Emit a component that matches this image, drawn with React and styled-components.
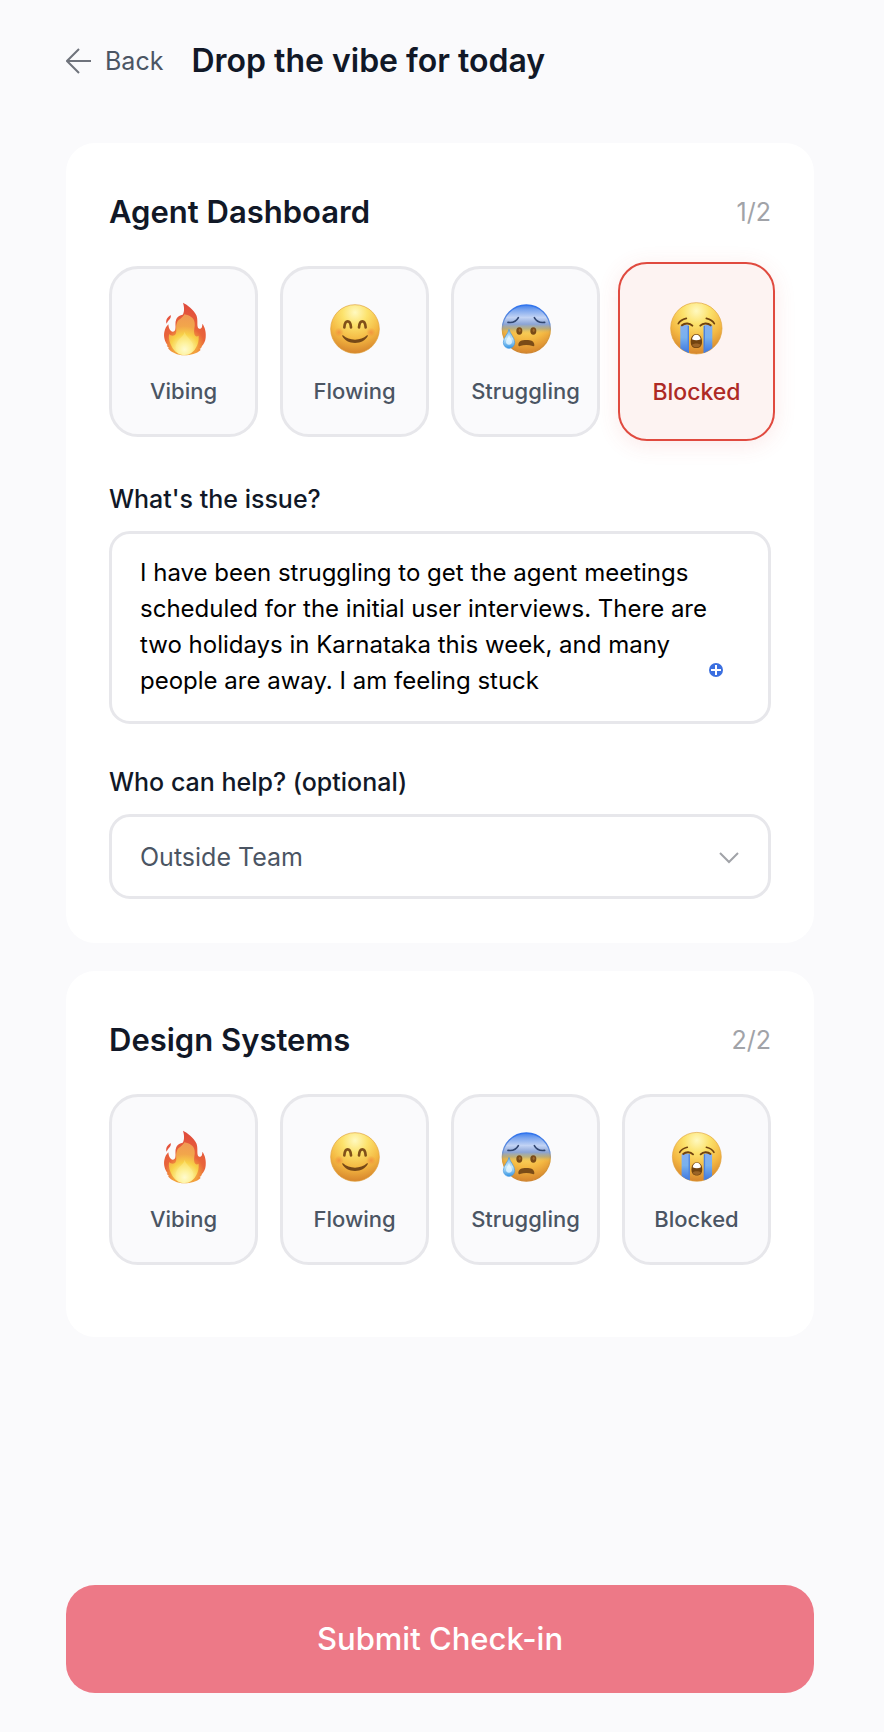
import { useId, useState } from "react";
import styled, { createGlobalStyle, css } from "styled-components";

const colors = {
  page: "#fafafc",
  card: "#ffffff",
  ink: "#111827",
  body: "#4b5563",
  muted: "#a1a3a8",
  line: "#e7e7eb",
  danger: "#e04a3f",
  dangerText: "#ae2a25",
  dangerBg: "#fdf3f2",
  submit: "#ed7987",
};

const GlobalStyle = createGlobalStyle`
  *, *::before, *::after {
    box-sizing: border-box;
  }

  body {
    margin: 0;
    background: ${colors.page};
    color: ${colors.ink};
    font-family: Inter, "Liberation Sans", sans-serif;
  }

  button, select, textarea {
    font-family: inherit;
    margin: 0;
  }
`;

const Page = styled.form`
  display: flex;
  flex-direction: column;
  min-height: 100vh;
  padding: 39px 70px 39px 66px;
`;

const Header = styled.header`
  display: flex;
  align-items: center;
  gap: 28px;
  margin-bottom: 60px;
`;

const BackLink = styled.a`
  display: flex;
  align-items: center;
  gap: 13px;
  color: ${colors.body};
  font-size: 25px;
  line-height: 34px;
  text-decoration: none;
`;

const Title = styled.h1`
  margin: 0;
  font-size: 32px;
  font-weight: 600;
  line-height: 44px;
`;

const Projects = styled.main`
  display: flex;
  flex-direction: column;
  gap: 28px;
`;

const Card = styled.section`
  padding: 49px 43px 44px;
  border-radius: 29px;
  background: ${colors.card};
`;

const CardHeader = styled.div`
  display: flex;
  align-items: center;
  justify-content: space-between;
  margin-bottom: 34px;
`;

const ProjectName = styled.h2`
  margin: 0;
  font-size: 31px;
  font-weight: 600;
  line-height: 40px;
`;

const Counter = styled.span`
  color: ${colors.muted};
  font-size: 25px;
  line-height: 34px;
`;

const Moods = styled.div`
  display: grid;
  grid-template-columns: repeat(4, 1fr);
  gap: 22px;
  margin-bottom: 28px;
`;

const MoodButton = styled.button`
  display: flex;
  flex-direction: column;
  align-items: center;
  gap: 17px;
  min-width: 0;
  padding: 30px 0 28px;
  border: 3px solid ${colors.line};
  border-radius: 29px;
  background: ${colors.page};
  color: ${colors.body};
  font-size: 22px;
  font-weight: 500;
  line-height: 30px;
  cursor: pointer;

  svg {
    width: 60px;
    height: 60px;
  }

  ${(props) =>
    props.$selected &&
    css`
      margin: -4px;
      padding: 33px 0 30px;
      border: 2px solid ${colors.danger};
      background: ${colors.dangerBg};
      box-shadow: 0 4px 22px rgba(224, 74, 63, 0.12);
      color: ${colors.dangerText};
      font-size: 23px;

      svg {
        width: 63px;
        height: 63px;
      }
    `}
`;

const Fields = styled.div`
  display: flex;
  flex-direction: column;
  gap: 41px;
  margin-top: 45px;
`;

const Field = styled.div`
  display: flex;
  flex-direction: column;
  gap: 15px;
`;

const Label = styled.label`
  font-size: 25px;
  font-weight: 500;
  line-height: 34px;
`;

const Control = styled.div`
  position: relative;
  display: flex;
`;

const controlBox = css`
  width: 100%;
  border: 3px solid ${colors.line};
  border-radius: 21px;
  background: ${colors.card};
  line-height: 36px;
  outline: none;
`;

const TextArea = styled.textarea`
  ${controlBox}
  padding: 21px 28px 22px;
  color: #000000;
  font-size: 24px;
  overflow: hidden;
  resize: none;
`;

const Select = styled.select`
  ${controlBox}
  padding: 22px 64px 21px 28px;
  color: ${colors.body};
  font-size: 25px;
  appearance: none;
`;

const AssistButton = styled.button`
  position: absolute;
  right: 48px;
  bottom: 47px;
  display: flex;
  padding: 0;
  border: 0;
  background: none;
`;

const SelectArrow = styled.svg`
  position: absolute;
  top: 38px;
  right: 32px;
  pointer-events: none;
`;

const SubmitButton = styled.button`
  margin-top: auto;
  padding: 34px;
  border: 0;
  border-radius: 29px;
  background: ${colors.submit};
  color: #ffffff;
  font-size: 31px;
  font-weight: 500;
  line-height: 40px;
  cursor: pointer;
`;

function FaceGradient({ id }) {
  return (
    <radialGradient id={id} cx="0.5" cy="0.16" r="0.86">
      <stop offset="0" stopColor="#fff9c0" />
      <stop offset="0.3" stopColor="#fce26c" />
      <stop offset="0.65" stopColor="#f4b842" />
      <stop offset="1" stopColor="#d4812b" />
    </radialGradient>
  );
}

function FireIcon() {
  const id = useId();
  return (
    <svg viewBox="11 27 180 180" aria-hidden="true">
      <defs>
        <radialGradient id={`${id}o`} gradientUnits="userSpaceOnUse" cx="103" cy="170" r="122">
          <stop offset="0.3" stopColor="#f2a03c" />
          <stop offset="0.5" stopColor="#e9643a" />
          <stop offset="1" stopColor="#e04c3c" />
        </radialGradient>
        <radialGradient id={`${id}i`} gradientUnits="userSpaceOnUse" cx="103" cy="178" r="112">
          <stop offset="0" stopColor="#fffde8" />
          <stop offset="0.18" stopColor="#fdf09a" />
          <stop offset="0.4" stopColor="#f8d148" />
          <stop offset="0.62" stopColor="#f2a64b" />
          <stop offset="1" stopColor="#ef9655" />
        </radialGradient>
      </defs>
      <path d="M61 75c2 7-2 12-6 16-3 3-5 7-6 10-4-9 1-19 12-26z" fill="#e5533d" />
      <path
        d="M98 38c13 7 32 20 40 38 5 12 2 26 4 34 2 9 11 8 13 0 1-3 1-6 1-9 8 10 12 27 10 42-1 10-5 18-11 25l-3 7-4 1 3 4c-12 11-30 16-49 16-21 0-39-8-49-21l3-1-7-7 3-1c-8-10-13-25-10-40 2-11 7-18 12-23 1 9 2 15 8 20 5 4 12 2 13-5 2-9-2-20 3-31 4-9 12-11 19-13 6-8 5-23 1-36z"
        fill={`url(#${id}o)`}
      />
      <path
        d="M102 73c16 3 29 10 31 25 2 11-4 23-1 34 2 8 8 9 13 5 1 15-2 27-9 38-7 12-18 20-33 20-17 0-29-9-37-22-8-13-12-27-10-41 6 6 16 7 20 0 5-10-2-20 4-34 4-11 16-12 22-25z"
        fill={`url(#${id}i)`}
      />
      <path
        d="M103 126c4 13 15 19 22 31 9 15 3 32-10 37-8 3-17 3-24 0-15-6-19-22-11-37 6-12 19-17 23-31z"
        fill="#fff7a0"
        opacity="0.35"
      />
    </svg>
  );
}

function SmileIcon() {
  const id = useId();
  return (
    <svg viewBox="30 27 180 180" aria-hidden="true">
      <defs>
        <FaceGradient id={`${id}f`} />
        <radialGradient id={`${id}b`}>
          <stop offset="0" stopColor="#ef7438" stopOpacity="0.55" />
          <stop offset="1" stopColor="#ef7438" stopOpacity="0" />
        </radialGradient>
      </defs>
      <circle cx="120" cy="117" r="73" fill={`url(#${id}f)`} stroke="#dfa03a" strokeWidth="2" />
      <circle cx="72" cy="127" r="14" fill={`url(#${id}b)`} />
      <circle cx="168" cy="127" r="14" fill={`url(#${id}b)`} />
      <g fill="none" stroke="#80501a" strokeLinecap="round">
        <path d="M88 112c1-13 5-18 10-18s9 5 10 18" strokeWidth="8" />
        <path d="M132 112c1-13 5-18 10-18s9 5 10 18" strokeWidth="8" />
      </g>
      <path
        d="M84 136c10 9 22 13 36 13s26-4 36-13c2-1 4 1 2 3-7 13-21 20-38 20s-31-7-38-20c-1-2 0-4 2-3z"
        fill="#764817"
      />
    </svg>
  );
}

function SweatIcon() {
  const id = useId();
  return (
    <svg viewBox="32 27 180 180" aria-hidden="true">
      <defs>
        <FaceGradient id={`${id}f`} />
        <linearGradient id={`${id}c`} x1="0" y1="0" x2="0" y2="1">
          <stop offset="0" stopColor="#3f7fee" />
          <stop offset="0.1" stopColor="#7ba5ee" />
          <stop offset="0.26" stopColor="#c2d3f4" />
          <stop offset="0.4" stopColor="#8ba4d6" />
          <stop offset="0.5" stopColor="#a9a584" stopOpacity="0.75" />
          <stop offset="0.6" stopColor="#f0bd4a" stopOpacity="0" />
        </linearGradient>
        <linearGradient id={`${id}r`} x1="0" y1="0" x2="0" y2="1">
          <stop offset="0" stopColor="#2f73ee" />
          <stop offset="0.4" stopColor="#6d94d8" />
          <stop offset="0.55" stopColor="#dba440" />
          <stop offset="1" stopColor="#cf8530" />
        </linearGradient>
        <linearGradient id={`${id}d`} x1="0" y1="0" x2="0" y2="1">
          <stop offset="0" stopColor="#74b6ed" />
          <stop offset="0.5" stopColor="#c3e7fc" />
          <stop offset="1" stopColor="#3494e3" />
        </linearGradient>
      </defs>
      <circle cx="123" cy="117" r="72" fill={`url(#${id}f)`} />
      <circle
        cx="123"
        cy="117"
        r="72"
        fill={`url(#${id}c)`}
        stroke={`url(#${id}r)`}
        strokeWidth="4"
      />
      <g fill="none" stroke="#30456f" strokeLinecap="round" strokeWidth="5">
        <path d="M68 97c13 2 25-3 31-14" />
        <path d="M178 97c-13 2-25-3-31-14" />
      </g>
      <ellipse cx="102" cy="123" rx="9" ry="11" fill="#7a4b17" />
      <ellipse cx="144" cy="123" rx="9" ry="11" fill="#7a4b17" />
      <ellipse cx="103" cy="121" rx="3" ry="5" fill="#a26c2a" />
      <ellipse cx="145" cy="121" rx="3" ry="5" fill="#a26c2a" />
      <path
        d="M99 165c0-11 10-15 24-15s24 4 24 15c0 4-2 4-5 3-12-4-26-4-38 0-3 1-5 1-5-3z"
        fill="#7a4b17"
      />
      <path
        d="M71 118c2 12 17 25 17 39 0 11-8 18-17 18s-17-7-17-18c0-14 15-27 17-39z"
        fill={`url(#${id}d)`}
        stroke="#4497df"
        strokeWidth="2"
      />
      <path d="M71 134c3 10 9 14 9 22 0 5-4 8-9 8s-9-3-9-8c0-8 6-12 9-22z" fill="#e8f8ff" opacity="0.8" />
    </svg>
  );
}

function CryIcon() {
  const id = useId();
  return (
    <svg viewBox="30 21 189 189" aria-hidden="true">
      <defs>
        <FaceGradient id={`${id}f`} />
        <linearGradient id={`${id}t`} x1="0" y1="0" x2="0" y2="1">
          <stop offset="0" stopColor="#86aef0" />
          <stop offset="0.45" stopColor="#78b1ee" />
          <stop offset="1" stopColor="#3d76df" />
        </linearGradient>
      </defs>
      <circle cx="124" cy="115" r="77" fill={`url(#${id}f)`} stroke="#dfa03a" strokeWidth="2" />
      <path d="M76 107q12-7 26 0v82q-14-4-26-14z" fill={`url(#${id}t)`} />
      <path d="M172 107q-12-7-26 0v82q14-4 26-14z" fill={`url(#${id}t)`} />
      <path d="M98 107h4v82l-4-1zM150 107h-4v82l4-1z" fill="#4c82dc" />
      <g fill="none" stroke="#70420f" strokeLinecap="round">
        <path d="M70 101c4-8 12-13 24-16" strokeWidth="5" />
        <path d="M178 101c-4-8-12-13-24-16" strokeWidth="5" />
        <path d="M81 106c9-8 23-7 31 1" strokeWidth="6" />
        <path d="M167 106c-9-8-23-7-31 1" strokeWidth="6" />
      </g>
      <path
        d="M124 132c10 0 17 9 17 23 0 12-6 19-17 19s-17-7-17-19c0-14 7-23 17-23z"
        fill="#71430f"
      />
      <path d="M111 148c1-9 6-14 13-14s12 5 13 14c-7 4-19 4-26 0z" fill="#ffffff" />
      <path d="M111 165c5-6 21-6 26 0-3 5-7 7-13 7s-10-2-13-7z" fill="#9b6427" />
    </svg>
  );
}

const moods = [
  { name: "Vibing", Icon: FireIcon },
  { name: "Flowing", Icon: SmileIcon },
  { name: "Struggling", Icon: SweatIcon },
  { name: "Blocked", Icon: CryIcon },
];

function ProjectCard(props) {
  const { name, position, initialMood, children } = props;
  const [mood, setMood] = useState(initialMood);

  return (
    <Card>
      <CardHeader>
        <ProjectName>{name}</ProjectName>
        <Counter>{position}</Counter>
      </CardHeader>
      <Moods>
        {moods.map(({ name: label, Icon }) => (
          <MoodButton
            key={label}
            type="button"
            $selected={mood === label}
            aria-pressed={mood === label}
            onClick={() => setMood(label)}
          >
            <Icon />
            {label}
          </MoodButton>
        ))}
      </Moods>
      {children}
    </Card>
  );
}

function BlockerFields() {
  return (
    <Fields>
      <Field>
        <Label htmlFor="issue">What's the issue?</Label>
        <Control>
          <TextArea
            id="issue"
            rows={4}
            spellCheck={false}
            defaultValue="I have been struggling to get the agent meetings scheduled for the initial user interviews. There are two holidays in Karnataka this week, and many people are away. I am feeling stuck"
          />
          <AssistButton type="button" aria-label="Writing suggestions">
            <svg width="14" height="14" viewBox="0 0 14 14">
              <circle cx="7" cy="7" r="7" fill="#3b6fe0" />
              <path d="M7 2v10M2 7h10" stroke="#ffffff" strokeWidth="2" />
            </svg>
          </AssistButton>
        </Control>
      </Field>
      <Field>
        <Label htmlFor="helper">Who can help? (optional)</Label>
        <Control>
          <Select id="helper" defaultValue="outside">
            <option value="outside">Outside Team</option>
          </Select>
          <SelectArrow width="20" height="12" viewBox="0 0 20 12" fill="none" aria-hidden="true">
            <path d="M1 1l9 9 9-9" stroke={colors.muted} strokeWidth="2" />
          </SelectArrow>
        </Control>
      </Field>
    </Fields>
  );
}

function App() {
  return (
    <>
      <GlobalStyle />
      <Page onSubmit={(event) => event.preventDefault()}>
        <Header>
          <BackLink href="#">
            <svg width="26" height="26" viewBox="0 0 26 26" fill="none" aria-hidden="true">
              <path d="M25 13H1M13 1L1 13l12 12" stroke="#6f737c" strokeWidth="2" />
            </svg>
            Back
          </BackLink>
          <Title>Drop the vibe for today</Title>
        </Header>
        <Projects>
          <ProjectCard name="Agent Dashboard" position="1/2" initialMood="Blocked">
            <BlockerFields />
          </ProjectCard>
          <ProjectCard name="Design Systems" position="2/2" />
        </Projects>
        <SubmitButton type="submit">Submit Check-in</SubmitButton>
      </Page>
    </>
  );
}

export default App;
